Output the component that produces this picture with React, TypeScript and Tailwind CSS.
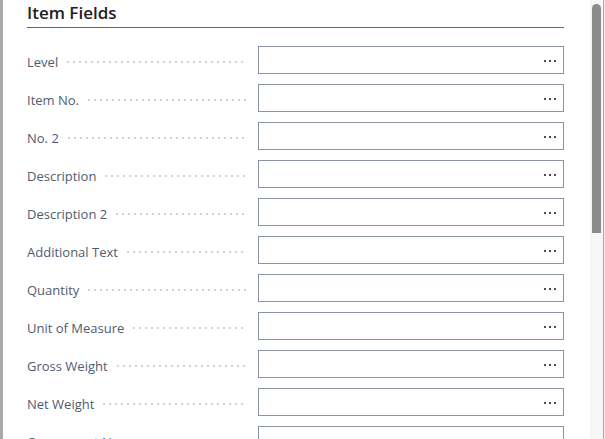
const fields = [
  "Level",
  "Item No.",
  "No. 2",
  "Description",
  "Description 2",
  "Additional Text",
  "Quantity",
  "Unit of Measure",
  "Gross Weight",
  "Net Weight",
  "Component No.",
];

function FieldRow({ label }: { label: string }) {
  return (
    <div className="flex h-[28px] items-center">
      <div className="flex w-[219px] items-center gap-[9px] pt-[3px]">
        <span className="whitespace-nowrap text-[13px] leading-[18px] text-[#505c6d]">{label}</span>
        <span className="h-[2px] flex-1 bg-[linear-gradient(to_right,#d2d2d2_2px,transparent_2px)] [background-size:6px_2px] bg-repeat-x" />
      </div>
      <div className="ml-[12px] flex h-[28px] w-[306px] items-center justify-end gap-[3px] border border-[#8a94a6] bg-white pr-[7px] pt-[1px]">
        <span className="h-[2px] w-[2px] bg-[#4a4a5a]" />
        <span className="h-[2px] w-[2px] bg-[#4a4a5a]" />
        <span className="h-[2px] w-[2px] bg-[#4a4a5a]" />
      </div>
    </div>
  );
}

export default function App() {
  return (
    <div className="flex h-[439px] w-[605px] overflow-hidden bg-white font-['Open_Sans',sans-serif]">
      <div className="w-[3px] shrink-0 bg-[#a9a9a9]" />
      <main className="flex-1 pl-[24px] pr-[26px]">
        <h2 className="flex h-[28px] items-end border-b border-[#5b6470] pb-[3px] text-[17px] font-semibold leading-[22px] text-[#212121]">
          Item Fields
        </h2>
        <div className="mt-[18px] flex flex-col gap-[10px]">
          {fields.map((f) => (
            <FieldRow key={f} label={f} />
          ))}
        </div>
      </main>
      <div className="w-[13px] shrink-0 bg-[#f7f7f7] px-[2px] pt-[4px]">
        <div className="h-[229px] rounded-t-full rounded-b-[4px] bg-[#8b8b8b]" />
      </div>
      <div className="w-[1px] shrink-0 bg-[#a8a8a8]" />
      <div className="w-[2px] shrink-0 bg-[#f0f0f0]" />
    </div>
  );
}
